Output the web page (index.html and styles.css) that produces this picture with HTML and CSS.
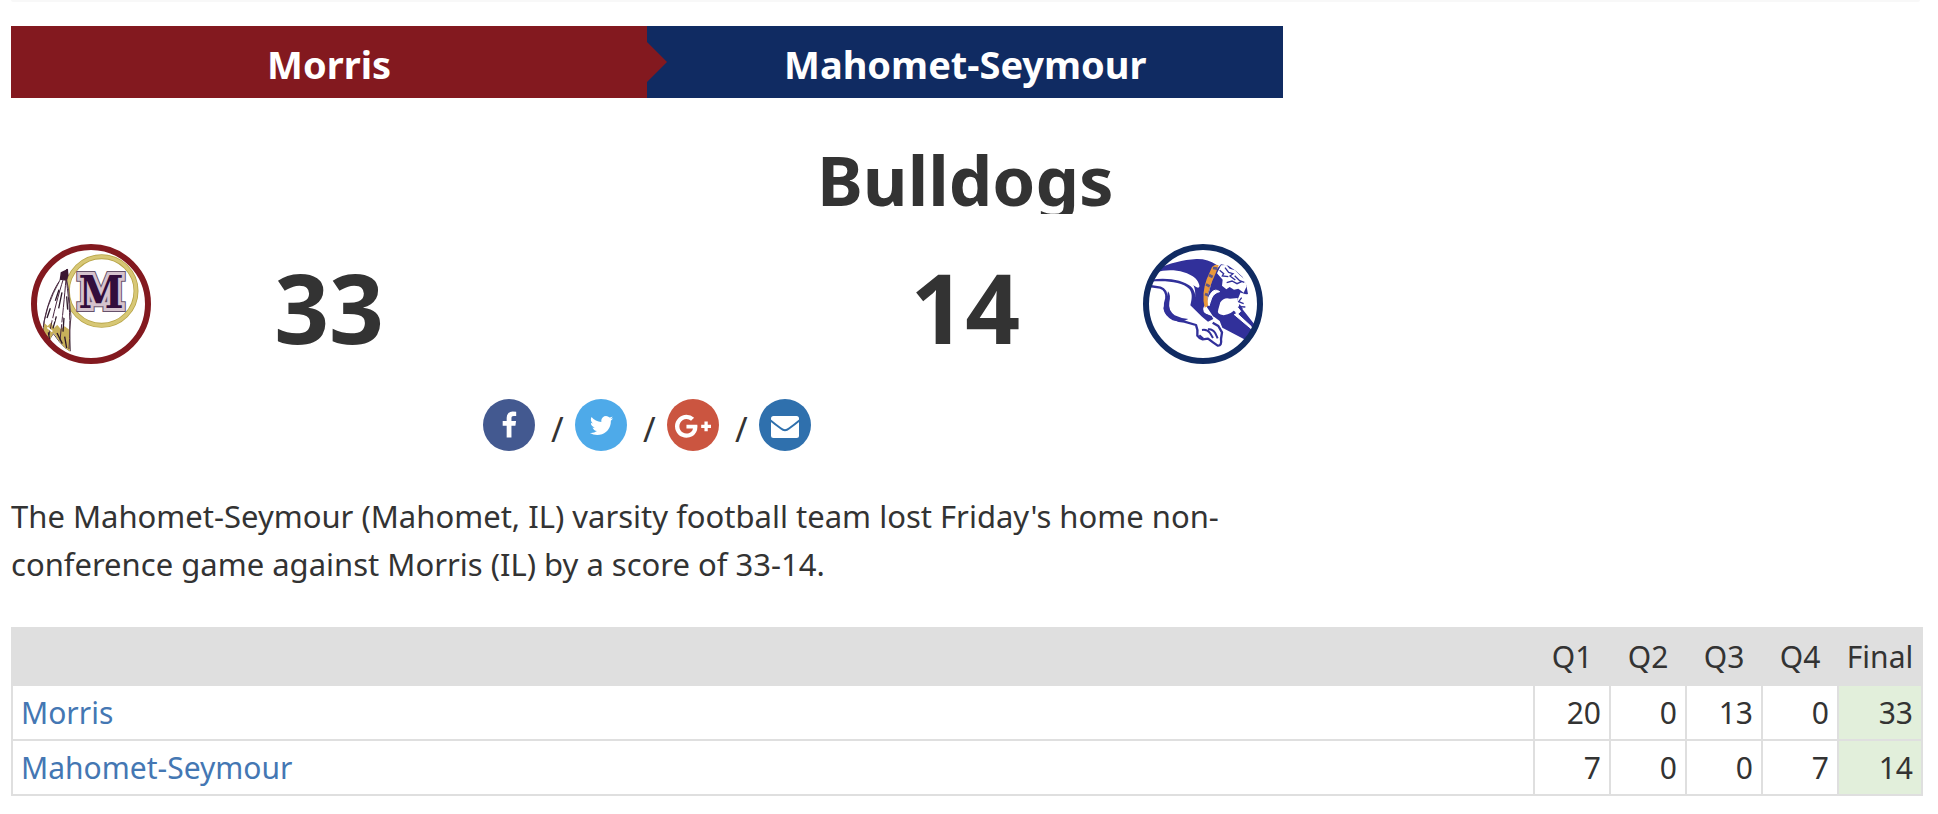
FILE: index.html
```html
<!DOCTYPE html>
<html lang="en">
<head>
<meta charset="utf-8">
<title>Morris vs Mahomet-Seymour</title>
<link rel="stylesheet" href="styles.css">
</head>
<body>
<div class="top-strip"></div>
<main class="page">
  <section class="scoreboard">
    <header class="teams">
      <h2 class="team team-away">Morris</h2>
      <h2 class="team team-home">Mahomet-Seymour</h2>
    </header>
    <div class="mascots">
      <h1 class="mascot">Bulldogs</h1>
    </div>
    <div class="scores">
      <div class="side side-away">
        <svg class="logo logo-away" viewBox="33 27 360 360" role="img" aria-label="Morris logo">
          <defs><clipPath id="away-clip"><circle cx="213" cy="207" r="172"/></clipPath></defs>
          <circle cx="213" cy="207" r="171" fill="#fff"/>
          <g clip-path="url(#away-clip)">
            <circle cx="245" cy="168" r="103" fill="none" stroke="#b8a548" stroke-width="15"/>
            <circle cx="245" cy="168" r="103" fill="none" stroke="#d7c775" stroke-width="10"/>
            <path d="M130 116L141 102L144 120L140 135L146 165L149 205L153 245L149 285L151 348L135 338L118 320L100 296L84 320L70 300L72 260L84 215L100 175L121 133Z" fill="#fff" stroke="#55424f" stroke-width="3"/>
            <path d="M73 264L83 273L94 262L101 280L112 269L122 282L134 274L149 285L150 350L133 337L117 318L101 293L86 320L69 300Z" fill="#c7b05a"/>
            <path d="M122 112L144 101L145 121L140 137L119 134Z" fill="#3b1732"/>
            <path d="M130 132C116 176 101 232 87 300M138 132C134 180 127 250 120 316M139 134C148 205 153 255 147 342M117 140C94 175 77 224 70 276" fill="none" stroke="#492740" stroke-width="3"/>
            <path d="M117 164L106 197M126 172L116 220M140 184L143 224M91 220L81 249M109 244L99 280M132 248L129 290M85 292L89 315M111 294L127 326M134 305L140 339" fill="none" stroke="#2d1829" stroke-width="4"/>
            <path d="M88 245L104 258M107 232L119 246M82 277L97 290M113 270L128 263M129 242L147 257" stroke="#fff" stroke-width="5"/>
          </g>
          <g class="logo-letter">
            <text class="letter-rim" x="243" y="218">M</text>
            <text class="letter-band" x="243" y="218">M</text>
            <text class="letter-core" x="243" y="218">M</text>
          </g>
          <circle cx="213" cy="207" r="171" fill="none" stroke="#83191f" stroke-width="18"/>
        </svg>
        <strong class="score">33</strong>
      </div>
      <div class="side side-home">
        <strong class="score">14</strong>
        <svg class="logo logo-home" viewBox="30 27 360 360" role="img" aria-label="Mahomet-Seymour logo">
          <defs><clipPath id="home-clip"><circle cx="210" cy="207" r="172"/></clipPath></defs>
          <circle cx="210" cy="207" r="171" fill="#fff"/>
          <g clip-path="url(#home-clip)">
            <path d="M72 101C107 86 151 74 190 72Q224 71 250 89L216 211Q203 224 218 236L234 244L207 238Q190 230 180 215C189 187 190 163 177 142C160 121 114 108 72 112Z" fill="#31309a"/>
            <path d="M56 132C102 119 151 126 181 151C207 170 202 146 187 130C157 104 104 101 70 112Z" fill="#fff"/>
            <path d="M54 134C105 126 151 136 173 154C190 170 190 193 182 216L205 231L236 243L241 252L225 260L207 245L172 211C178 188 178 174 169 162C147 140 103 137 52 140Z" fill="#31309a"/>
            <path d="M50 153L82 158Q102 165 100 190Q91 217 102 236Q121 257 154 260L189 270Q196 286 193 302Q198 310 209 313L225 311L240 322L254 332Q267 333 264 312L267 292L256 273L239 263" fill="none" stroke="#31309a" stroke-width="7" stroke-linejoin="round"/>
            <path d="M105 169Q114 179 109 202Q105 226 125 241Q145 251 166 252L146 261L119 256Q94 242 91 220L101 190Z" fill="#31309a"/>
            <path d="M207 285Q222 282 231 294L240 309M225 283Q239 281 247 295L254 310M199 301L211 311" fill="none" stroke="#31309a" stroke-width="6"/>
            <path d="M240 243L260 258L268 278L348 320L370 275L325 218L285 231Z" fill="#31309a"/>
            <path d="M243 112L264 88L286 92L309 108L329 126L340 151L345 177L328 181L321 199L331 219L310 236L278 249L240 244L218 211Z" fill="#31309a"/>
            <path d="M262 202Q274 185 291 191L314 189L312 218Q297 236 272 241Q250 239 256 223Z" fill="#fff"/>
            <path d="M252 115L264 91L280 90L290 101L306 106L320 120L335 133L341 154L332 173L316 161L303 164L290 156L280 163L267 152L269 134Z" fill="#fff"/>
            <path d="M260 106L272 116L268 123L286 125M276 98L287 112L300 116L291 123L307 135M281 143L297 138L312 146L326 140M305 122L320 137L334 142" fill="none" stroke="#31309a" stroke-width="4"/>
            <path d="M322 174L340 180L331 187L338 199L343 216L329 219L320 204L314 217L323 229L313 238L302 223M222 209Q224 185 236 172Q247 160 260 170Q244 173 236 189Q231 204 228 213M311 234L354 274L359 285L303 238" fill="#fff" stroke="#fff" stroke-width="3"/>
            <path d="M326 188L317 200L332 206M319 215L337 216" fill="none" stroke="#31309a" stroke-width="4"/>
            <path d="M237 96Q248 85 257 91L248 115L235 145L223 181L225 213L215 218Q205 176 221 133Z" fill="#e9983c"/>
            <path d="M240 99L253 101M228 120L239 126M219 148L230 154M216 177L226 181" stroke="#5d568b" stroke-width="8"/>
          </g>
          <circle cx="210" cy="207" r="171" fill="none" stroke="#102b62" stroke-width="18"/>
        </svg>
      </div>
    </div>
    <nav class="share" aria-label="Share">
      <a class="share-link facebook" href="#" aria-label="Facebook"><svg viewBox="0 0 52 52"><path transform="translate(12.2 12.6) scale(.015625)" d="M1343 12v264h-157q-86 0-116 36t-30 108v189h293l-39 296h-254v759h-306v-759h-255v-296h255v-218q0-186 104-288.500t277-102.500q147 0 228 12z"/></svg></a>
      <span class="slash">/</span>
      <a class="share-link twitter" href="#" aria-label="Twitter"><svg viewBox="0 0 52 52"><path transform="translate(13.3 13.300) scale(.0148)" d="M1684 408q-67 98-162 167 1 14 1 42 0 130-38 259.500t-115.500 248.500-184.500 210.500-258 146-323 54.500q-271 0-496-145 35 4 78 4 225 0 401-138-105-2-188-64.500t-114-159.500q33 5 61 5 43 0 85-11-112-23-185.500-111.500t-73.500-205.500v-4q68 38 146 41-66-44-105-115t-39-154q0-88 44-163 121 149 294.500 238.500t371.500 99.500q-8-38-8-74 0-134 94.500-228.500t228.500-94.500q140 0 236 102 109-21 205-78-37 115-142 178 93-10 186-50z"/></svg></a>
      <span class="slash">/</span>
      <a class="share-link google" href="#" aria-label="Google Plus"><svg viewBox="0 0 52 52"><path transform="translate(8 13.300) scale(.015625)" d="M1437 913q0 208-87 370.500t-248 254-369 91.500q-149 0-285-58t-234-156-156-234-58-285 58-285 156-234 234-156 285-58q286 0 491 192l-199 191q-117-113-292-113-123 0-227.500 62t-165.500 168.500-61 232.500 61 232.500 165.500 168.500 227.500 62q83 0 152.500-23t114.500-57.500 78.500-78.500 49-83 21.500-74h-416v-252h692q12 63 12 122zm867-122v210h-209v209h-210v-209h-209v-210h209v-209h210v209h209z"/></svg></a>
      <span class="slash">/</span>
      <a class="share-link mail" href="#" aria-label="Email"><svg viewBox="0 0 52 52"><rect x="12" y="17" width="28" height="22" rx="2.500"/><path class="flap" d="M11 21Q17 26 22 29.500Q26 33 30 29.500Q35 26 41 21"/></svg></a>
    </nav>
    <p class="summary">The Mahomet-Seymour (Mahomet, IL) varsity football team lost Friday's home non-conference game against Morris (IL) by a score of 33-14.</p>
  </section>
  <table class="box-score">
    <thead>
      <tr><th class="name" aria-label="Team"></th><th>Q1</th><th>Q2</th><th>Q3</th><th>Q4</th><th class="final">Final</th></tr>
    </thead>
    <tbody>
      <tr><td class="name"><a href="#">Morris</a></td><td>20</td><td>0</td><td>13</td><td>0</td><td class="final">33</td></tr>
      <tr><td class="name"><a href="#">Mahomet-Seymour</a></td><td>7</td><td>0</td><td>0</td><td>7</td><td class="final">14</td></tr>
    </tbody>
  </table>
</main>
</body>
</html>
```
FILE: styles.css
```css
* { box-sizing: border-box; }
body {
  margin: 0;
  background: #fff;
  color: #333;
  font-family: "Noto Sans", "Open Sans", sans-serif;
  font-size: 30px;
}
h1, h2, p { margin: 0; }
a { color: #4477b3; text-decoration: none; }
.top-strip {
  height: 2px;
  margin: 0 18px 0 11px;
  border-radius: 0 0 2px 2px;
  background: #f8f8f8;
}
.page { padding: 24px 15px 18px 11px; }
.scoreboard { width: 66.55%; }
.teams { display: grid; grid-template-columns: 1fr 1fr; }
.team {
  height: 72px;
  color: #fff;
  font-size: 38px;
  line-height: 76px;
  text-align: center;
}
.team-away { position: relative; background: #83191f; }
.team-away::after {
  content: "";
  position: absolute;
  top: 16px;
  left: 100%;
  border: solid transparent;
  border-width: 20px 0 20px 20px;
  border-left-color: #83191f;
}
.team-home { background: #102b62; }
.mascots {
  display: grid;
  grid-template-columns: 1fr 1fr;
  margin-top: 44px;
}
.mascot {
  grid-column: 2;
  height: 72px;
  overflow: hidden;
  font-size: 69px;
  line-height: 74px;
  text-align: center;
}
.scores {
  display: grid;
  grid-template-columns: 1fr 1fr;
  margin-top: 30px;
}
.side {
  display: grid;
  grid-template-columns: 120px 1fr 120px;
  align-items: center;
  padding: 0 20px;
}
.side-home .score { grid-column: 2; }
.logo { width: 120px; height: 120px; }
.logo-letter {
  font-family: "DejaVu Serif Condensed", "DejaVu Serif", serif;
  font-size: 136px;
  font-weight: bold;
  text-anchor: middle;
}
.letter-rim { fill: #66516a; stroke: #66516a; stroke-width: 24px; }
.letter-band { fill: #d5c3ce; stroke: #d5c3ce; stroke-width: 18px; }
.letter-core { fill: #320d3c; }
.score {
  height: 120px;
  font-size: 96px;
  line-height: 126px;
  text-align: center;
}
.share {
  display: flex;
  justify-content: center;
  margin-top: 35px;
}
.share-link {
  width: 52px;
  height: 52px;
  border-radius: 50%;
}
.share-link svg { display: block; fill: #fff; }
.facebook { background: #435990; }
.twitter { background: #4eaae9; }
.google { background: #cb5540; }
.mail { background: #2f70ad; }
.flap { fill: none; stroke: #2f70ad; stroke-width: 2; }
.slash {
  width: 40px;
  padding-left: 4px;
  font-size: 34px;
  line-height: 60px;
  text-align: center;
}
.summary {
  margin-top: 33px;
  font-size: 31px;
  line-height: 48px;
}
.box-score {
  width: 100%;
  margin-top: 39px;
  border-collapse: collapse;
  table-layout: fixed;
  line-height: 40px;
}
.box-score th, .box-score td {
  width: 76px;
  height: 55px;
  padding: 6px 8px;
  border: 2px solid #dfdfdf;
  text-align: right;
}
.box-score th {
  height: 57px;
  background: #dfdfdf;
  font-weight: normal;
  text-align: center;
}
.box-score .name { width: auto; text-align: left; }
.box-score .final { width: 84px; }
.box-score th.final { padding: 6px 0; }
.box-score td.final { background: #e2efdb; }
```
